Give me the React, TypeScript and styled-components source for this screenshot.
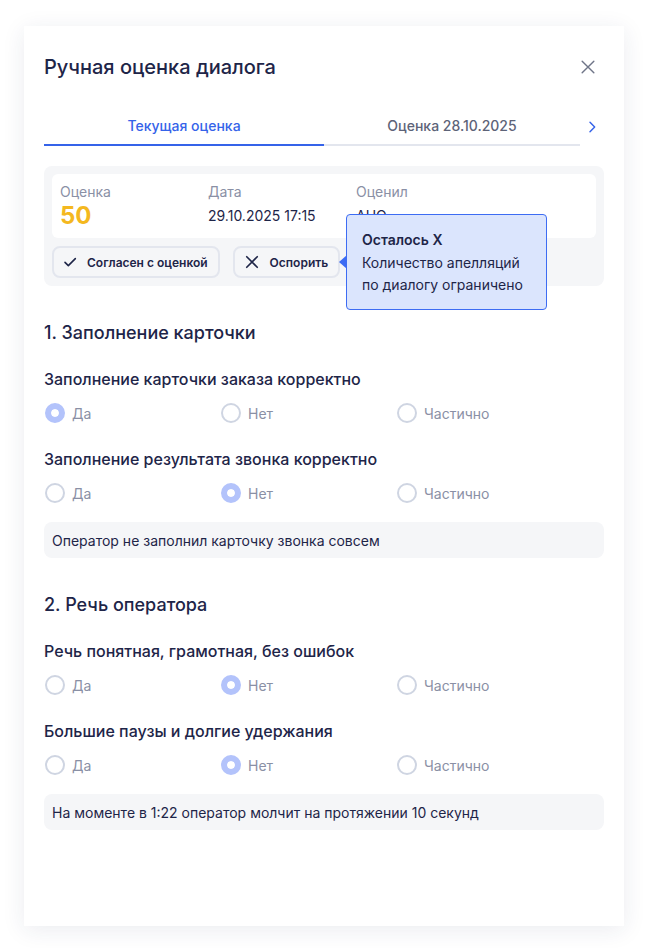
import React from 'react';
import styled, { createGlobalStyle } from 'styled-components';

const Colors = {
  text: '#1e2548',
  muted: '#8a90a5',
  blue: '#3563e9',
  line: '#e3e6ee',
  soft: '#f5f6f8',
  yellow: '#f4b81f',
  radio: '#cfd5e2',
  radioOn: '#b3c3fb',
  tipBg: '#dbe5fd',
  tipBorder: '#3d6cf3',
};

const GlobalStyle = createGlobalStyle`
  * { box-sizing: border-box; }
  body {
    margin: 0;
    background: #fff;
    font-family: Inter, "Noto Sans", sans-serif;
    color: ${Colors.text};
  }
`;

const Page = styled.div`
  padding: 26px 24px 22px;
`;

const Dialog = styled.div`
  width: 600px;
  height: 900px;
  background: #fff;
  padding: 28px 20px 20px;
  box-shadow: 0 4px 22px rgba(30, 40, 90, 0.09);
`;

const Header = styled.div`
  display: flex;
  align-items: center;
  justify-content: space-between;
  height: 26px;
`;

const Title = styled.h1`
  margin: 0;
  font-size: 20px;
  line-height: 26px;
  font-weight: 500;
`;

const IconButton = styled.button`
  display: flex;
  align-items: center;
  justify-content: center;
  width: 24px;
  height: 24px;
  margin-right: 4px;
  padding: 0;
  border: 0;
  background: none;
  color: #6f7588;
  cursor: pointer;
`;

const TabsRow = styled.div`
  display: flex;
  margin-top: 28px;
`;

const TabList = styled.div`
  display: flex;
  width: 536px;
  border-bottom: 2px solid ${Colors.line};
`;

const Tab = styled.div<{ $active?: boolean }>`
  flex: ${({ $active }) => ($active ? '0 0 280px' : '1')};
  text-align: center;
  padding: 8px 0 8px;
  font-size: 14px;
  line-height: 20px;
  font-weight: 500;
  margin-bottom: -2px;
  color: ${({ $active }) => ($active ? Colors.blue : '#5d6378')};
  border-bottom: 2px solid ${({ $active }) => ($active ? Colors.blue : 'transparent')};
`;

const TabArrow = styled.button`
  flex: 1;
  display: flex;
  align-items: center;
  justify-content: center;
  padding: 0;
  border: 0;
  background: none;
  color: ${Colors.blue};
  cursor: pointer;
`;

const Summary = styled.div`
  position: relative;
  margin-top: 20px;
  padding: 8px;
  background: ${Colors.soft};
  border-radius: 8px;
`;

const SummaryCard = styled.div`
  display: grid;
  grid-template-columns: 148px 148px 1fr;
  height: 64px;
  padding: 9px 8px;
  background: #fff;
  border-radius: 6px;
`;

const Field = styled.div`
  display: flex;
  flex-direction: column;
`;

const FieldLabel = styled.span`
  font-size: 14px;
  line-height: 18px;
  color: ${Colors.muted};
`;

const FieldValue = styled.span<{ $score?: boolean }>`
  display: flex;
  align-items: center;
  height: 28px;
  font-size: ${({ $score }) => ($score ? '24px' : '14px')};
  font-weight: ${({ $score }) => ($score ? 700 : 400)};
  color: ${({ $score }) => ($score ? Colors.yellow : Colors.text)};
`;

const Actions = styled.div`
  display: flex;
  gap: 13px;
  margin-top: 8px;
`;

const ActionButton = styled.button`
  display: flex;
  align-items: center;
  gap: 9px;
  height: 32px;
  padding: 0 10px 0 8px;
  border: 2px solid ${Colors.line};
  border-radius: 8px;
  background: ${Colors.soft};
  font-family: inherit;
  font-size: 12px;
  font-weight: 600;
  color: ${Colors.text};
  cursor: pointer;
`;

const Tooltip = styled.div`
  position: absolute;
  left: 302px;
  top: 48px;
  width: 201px;
  height: 96px;
  padding: 16px 15px;
  background: ${Colors.tipBg};
  border: 1px solid ${Colors.tipBorder};
  border-radius: 4px;
  font-size: 14px;
  line-height: 22px;
  color: ${Colors.text};

  &::before {
    content: '';
    position: absolute;
    left: -8px;
    top: 40px;
    border-top: 7px solid transparent;
    border-bottom: 7px solid transparent;
    border-right: 8px solid ${Colors.tipBorder};
  }
`;

const TooltipTitle = styled.div`
  font-weight: 600;
  line-height: 18px;
  margin-bottom: 3px;
`;

const SectionTitle = styled.h2`
  margin: 35px 0 0;
  font-size: 18px;
  line-height: 24px;
  font-weight: 500;
`;

const Question = styled.div`
  margin-top: 22px;
  & + & {
    margin-top: 24px;
  }
`;

const QuestionLabel = styled.div`
  font-size: 16px;
  line-height: 24px;
  font-weight: 500;
`;

const Options = styled.div`
  display: grid;
  grid-template-columns: 176px 176px 1fr;
  margin-top: 12px;
`;

const Option = styled.label`
  display: flex;
  align-items: center;
  gap: 7px;
  height: 20px;
  font-size: 14px;
  color: ${Colors.muted};
`;

const RadioMark = styled.span<{ $checked?: boolean }>`
  width: 20px;
  height: 20px;
  margin-left: 1px;
  border-radius: 50%;
  background: ${({ $checked }) => ($checked ? Colors.radioOn : '#fff')};
  border: ${({ $checked }) => ($checked ? `6px solid ${Colors.radioOn}` : `2px solid ${Colors.radio}`)};
  box-shadow: ${({ $checked }) => ($checked ? 'inset 0 0 0 4px #fff' : 'none')};
`;

const Comment = styled.div`
  display: flex;
  align-items: center;
  height: 36px;
  margin-top: 19px;
  padding: 0 8px;
  background: ${Colors.soft};
  border-radius: 8px;
  font-size: 14px;
  color: ${Colors.text};
`;

const CloseIcon = ({ size = 18, width = 1.8 }: { size?: number; width?: number }) => (
  <svg width={size} height={size} viewBox="0 0 24 24" fill="none" stroke="currentColor" strokeWidth={width} strokeLinecap="round">
    <path d="M5 5l14 14M19 5L5 19" />
  </svg>
);

const CheckIcon = () => (
  <svg width="16" height="16" viewBox="0 0 24 24" fill="none" stroke="currentColor" strokeWidth={2.4} strokeLinecap="round" strokeLinejoin="round">
    <path d="M4.5 12.5l5 5L20 7" />
  </svg>
);

const ChevronRight = () => (
  <svg width="16" height="16" viewBox="0 0 24 24" fill="none" stroke="currentColor" strokeWidth={2.2} strokeLinecap="round" strokeLinejoin="round">
    <path d="M9 5l7 7-7 7" />
  </svg>
);

const answers = ['Да', 'Нет', 'Частично'];

interface QuestionData {
  label: string;
  value: string;
}

interface SectionData {
  title: string;
  questions: QuestionData[];
  comment: string;
}

const sections: SectionData[] = [
  {
    title: '1. Заполнение карточки',
    questions: [
      { label: 'Заполнение карточки заказа корректно', value: 'Да' },
      { label: 'Заполнение результата звонка корректно', value: 'Нет' },
    ],
    comment: 'Оператор не заполнил карточку звонка совсем',
  },
  {
    title: '2. Речь оператора',
    questions: [
      { label: 'Речь понятная, грамотная, без ошибок', value: 'Нет' },
      { label: 'Большие паузы и долгие удержания', value: 'Нет' },
    ],
    comment: 'На моменте в 1:22 оператор молчит на протяжении 10 секунд',
  },
];

const App: React.FC = () => (
  <Page>
    <GlobalStyle />
    <Dialog>
      <Header>
        <Title>Ручная оценка диалога</Title>
        <IconButton aria-label="Закрыть">
          <CloseIcon size={20} width={1.7} />
        </IconButton>
      </Header>

      <TabsRow>
        <TabList>
          <Tab $active>Текущая оценка</Tab>
          <Tab>Оценка 28.10.2025</Tab>
        </TabList>
        <TabArrow aria-label="Далее">
          <ChevronRight />
        </TabArrow>
      </TabsRow>

      <Summary>
        <SummaryCard>
          <Field>
            <FieldLabel>Оценка</FieldLabel>
            <FieldValue $score>50</FieldValue>
          </Field>
          <Field>
            <FieldLabel>Дата</FieldLabel>
            <FieldValue>29.10.2025 17:15</FieldValue>
          </Field>
          <Field>
            <FieldLabel>Оценил</FieldLabel>
            <FieldValue>АНО</FieldValue>
          </Field>
        </SummaryCard>
        <Actions>
          <ActionButton>
            <CheckIcon />
            Согласен с оценкой
          </ActionButton>
          <ActionButton>
            <CloseIcon size={18} width={2.2} />
            Оспорить
          </ActionButton>
        </Actions>
        <Tooltip>
          <TooltipTitle>Осталось X</TooltipTitle>
          Количество апелляций по диалогу ограничено
        </Tooltip>
      </Summary>

      {sections.map((section) => (
        <React.Fragment key={section.title}>
          <SectionTitle>{section.title}</SectionTitle>
          {section.questions.map((q) => (
            <Question key={q.label}>
              <QuestionLabel>{q.label}</QuestionLabel>
              <Options>
                {answers.map((a) => (
                  <Option key={a}>
                    <RadioMark $checked={a === q.value} />
                    {a}
                  </Option>
                ))}
              </Options>
            </Question>
          ))}
          <Comment>{section.comment}</Comment>
        </React.Fragment>
      ))}
    </Dialog>
  </Page>
);

export default App;
